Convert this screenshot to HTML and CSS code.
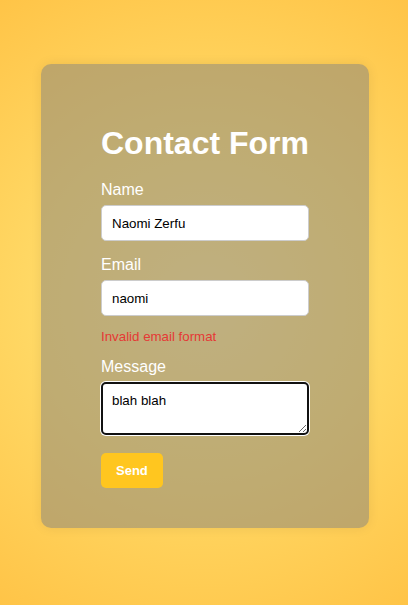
FILE: index.html
```html
<!DOCTYPE html>
<html lang="en">
<head>
<meta charset="utf-8">
<title>Contact Form</title>
<link rel="stylesheet" href="styles.css">
</head>
<body>
  <main class="page">
    <form class="card">
      <h1 class="title">Contact Form</h1>
      <label class="label" for="name">Name</label>
      <input class="field" id="name" type="text" value="Naomi Zerfu">
      <label class="label" for="email">Email</label>
      <input class="field" id="email" type="text" value="naomi">
      <p class="error">Invalid email format</p>
      <label class="label" for="message">Message</label>
      <textarea class="field area focused" id="message">blah blah</textarea>
      <button class="send" type="button">Send</button>
    </form>
  </main>
</body>
</html>
```

FILE: styles.css
```css
* { box-sizing: border-box; }
html, body {
  margin: 0;
  padding: 0;
  height: 100%;
}
body {
  font-family: "Liberation Sans", Arial, sans-serif;
  background: radial-gradient(circle at 50% 50%, #ffe082 0%, #ffd966 45%, #ffc447 100%);
  min-height: 605px;
}
.page {
  padding: 64px 39px 0 41px;
}
.card {
  display: flex;
  flex-direction: column;
  align-items: stretch;
  background: rgba(128, 128, 128, 0.5);
  border-radius: 10px;
  padding: 40px 60px;
  box-shadow: 0 0 12px rgba(0, 0, 0, 0.08);
}
.title {
  margin: 21px 0 19px;
  font-size: 32px;
  font-weight: bold;
  color: #fff;
  line-height: 37px;
}
.label {
  color: #fff;
  font-size: 16px;
  line-height: 18px;
  margin-bottom: 6px;
}
.field {
  display: block;
  width: 100%;
  height: 36px;
  padding: 0 10px;
  border: 1px solid #cccccc;
  border-radius: 5px;
  background: #fff;
  font-family: "Liberation Sans", Arial, sans-serif;
  font-size: 13.333px;
  color: #000;
  margin: 0 0 15px;
  outline: none;
}
.error {
  margin: -2px 0 14px;
  color: #e53935;
  font-size: 13.3px;
  line-height: 15px;
}
.area {
  height: 53px;
  padding: 10px 10px;
  resize: vertical;
  margin-bottom: 18px;
}
.focused {
  border: 2px solid #111;
  box-shadow: 0 0 0 1px #fff;
  padding: 9px 9px;
}
.send {
  align-self: flex-start;
  height: 35px;
  padding: 0 15px;
  border: none;
  border-radius: 5px;
  background: #ffc61f;
  color: #fff;
  font-family: "Liberation Sans", Arial, sans-serif;
  font-weight: bold;
  font-size: 13px;
}
```
